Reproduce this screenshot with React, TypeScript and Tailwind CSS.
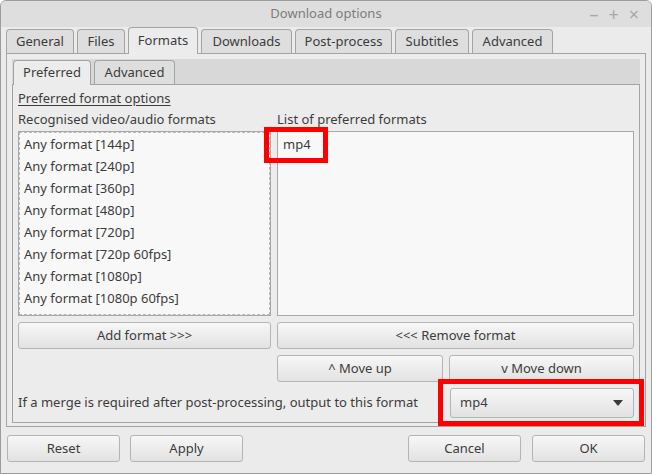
const FORMATS = [
  'Any format [144p]',
  'Any format [240p]',
  'Any format [360p]',
  'Any format [480p]',
  'Any format [720p]',
  'Any format [720p 60fps]',
  'Any format [1080p]',
  'Any format [1080p 60fps]',
  'Any format [1440p]',
];

const OUTER_TABS = [
  { label: 'General', w: 'w-[68px]' },
  { label: 'Files', w: 'w-[48px]' },
  { label: 'Formats', w: 'w-[70px]' },
  { label: 'Downloads', w: 'w-[91px]' },
  { label: 'Post-process', w: 'w-[97px]' },
  { label: 'Subtitles', w: 'w-[74px]' },
  { label: 'Advanced', w: 'w-[81px]' },
];

function Button({ label, className }: { label: string; className: string }) {
  return (
    <div
      className={`flex items-center justify-center rounded-[3px] border border-[#b4b4b4] bg-gradient-to-b from-[#f7f7f7] to-[#e2e2e2] text-[#3c3c3c] ${className}`}
    >
      {label}
    </div>
  );
}

export default function App() {
  return (
    <div
      className="flex h-[474px] w-[652px] flex-col overflow-hidden rounded-t-[6px] border border-[#9c9c9c] bg-[#ebebeb] text-[13px] text-[#3c3c3c]"
      style={{ fontFamily: '"Noto Sans", "DejaVu Sans", sans-serif' }}
    >
      {/* Title bar */}
      <div className="grid h-[26px] shrink-0 grid-cols-[1fr_auto_1fr] items-center bg-[#dedede]">
        <div />
        <div className="text-[13px] text-[#7c7c7c]">Download options</div>
        <div className="flex items-center justify-end gap-[10px] pr-[12px] text-[18px] leading-none text-[#a8a8a8]">
          <span>–</span>
          <span>+</span>
          <span>×</span>
        </div>
      </div>

      {/* Outer tabs */}
      <div className="flex h-[26px] shrink-0 items-end gap-[3px] px-[5px]">
        {OUTER_TABS.map((t) => (
          <div
            key={t.label}
            className={
              t.label === 'Formats'
                ? `relative z-10 -mb-px flex h-[27px] items-center justify-center rounded-t-[4px] border border-b-0 border-[#a4a4a4] bg-[#ececec] ${t.w}`
                : `flex h-[24px] items-center justify-center rounded-t-[4px] border border-b-0 border-[#a4a4a4] bg-[#dedede] ${t.w}`
            }
          >
            {t.label}
          </div>
        ))}
      </div>

      {/* Outer pane */}
      <div className="mx-[5px] flex h-[374px] shrink-0 flex-col border border-[#a4a4a4] bg-[#ececec] px-[5px] pt-[5px]">
        {/* Inner tab bar */}
        <div className="flex h-[25px] shrink-0 items-end gap-[3px] bg-[#d8d8d8] pl-px">
          <div className="relative z-10 -mb-px flex h-[25px] w-[78px] items-center justify-center rounded-t-[4px] border border-b-0 border-[#a4a4a4] bg-[#ececec]">
            Preferred
          </div>
          <div className="flex h-[24px] w-[81px] items-center justify-center rounded-t-[4px] border border-b-0 border-[#a4a4a4] bg-[#dedede]">
            Advanced
          </div>
        </div>

        {/* Inner pane */}
        <div className="flex h-[339px] shrink-0 flex-col border border-[#a4a4a4] bg-[#ececec] px-[5px]">
          <div className="mt-[3px] h-[20px] leading-[20px] underline underline-offset-2">Preferred format options</div>
          <div className="flex h-[23px] items-center">
            <div className="w-[259px]">Recognised video/audio formats</div>
            <div>List of preferred formats</div>
          </div>

          <div className="flex h-[185px] gap-[6px]">
            <div className="w-[253px] border border-[#a8a8a8] bg-[#f8f8f8]">
              <div className="h-full overflow-hidden border border-dashed border-[#b8b8b8] pl-[4px]">
                {FORMATS.map((f) => (
                  <div key={f} className="h-[22px] leading-[22px]">
                    {f}
                  </div>
                ))}
              </div>
            </div>
            <div className="relative flex-1 border border-[#a8a8a8] bg-[#f8f8f8] pl-[5px]">
              <div className="h-[22px] leading-[24px]">mp4</div>
              <div className="absolute left-[-14px] top-[-5px] h-[36px] w-[64px] border-[5px] border-[#ff0000]" />
            </div>
          </div>

          <div className="mt-[6px] flex h-[27px] gap-[6px]">
            <Button label="Add format >>>" className="w-[253px]" />
            <Button label="<<< Remove format" className="flex-1" />
          </div>

          <div className="mt-[6px] flex h-[27px] gap-[6px] pl-[259px]">
            <Button label="^ Move up" className="w-[166px]" />
            <Button label="v Move down" className="flex-1" />
          </div>

          <div className="mt-[6px] flex h-[30px] items-center justify-between">
            <div>If a merge is required after post-processing, output to this format</div>
            <div className="relative flex h-[30px] w-[184px] items-center justify-between rounded-[3px] border border-[#b4b4b4] bg-gradient-to-b from-[#f7f7f7] to-[#e2e2e2] pl-[9px] pr-[10px]">
              <span>mp4</span>
              <svg width="10" height="6" viewBox="0 0 10 6">
                <path d="M0 0 L10 0 L5 6 Z" fill="#3a3a3a" />
              </svg>
              <div className="absolute left-[-13px] top-[-10px] h-[47px] w-[206px] border-[5px] border-[#ff0000]" />
            </div>
          </div>
        </div>
      </div>

      {/* Bottom buttons */}
      <div className="mt-[8px] flex h-[27px] shrink-0 px-[6px]">
        <Button label="Reset" className="w-[113px]" />
        <Button label="Apply" className="ml-[10px] w-[113px]" />
        <div className="flex-1" />
        <Button label="Cancel" className="w-[113px]" />
        <Button label="OK" className="ml-[11px] w-[113px]" />
      </div>
    </div>
  );
}
